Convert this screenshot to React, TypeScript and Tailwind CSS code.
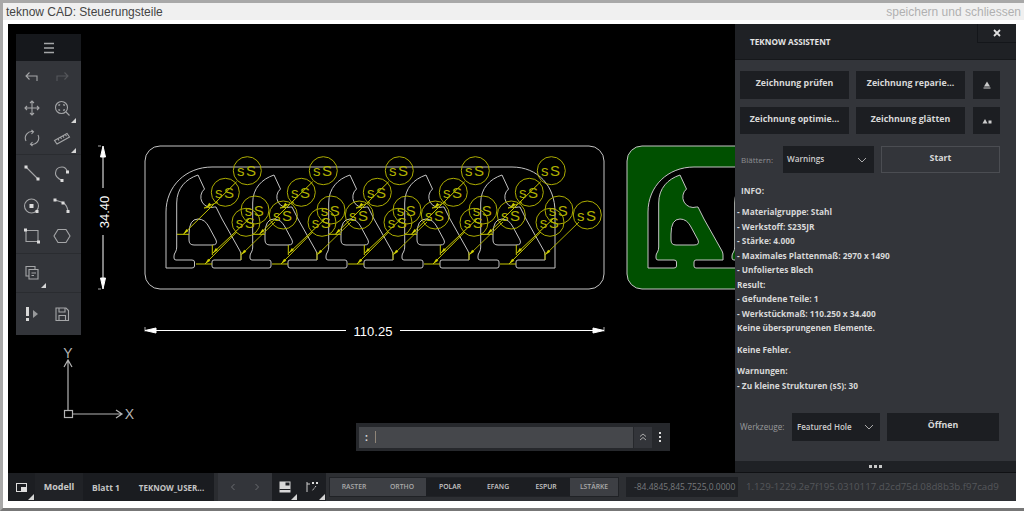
import React from "react";

const OPEN = "font-['Open_Sans',sans-serif]";

const periods = [0, 76, 152, 228, 304];

function contour() {
  let d = "M166 212V268H192Q194.500 268 194.500 266V262Q194.500 260 192 260H176Q174 260 174 258V256Q174 254 175.500 252Q176.700 250 176.700 247";
  periods.forEach((p, i) => {
    const x = (v: number) => v + p;
    if (i > 0) {
      d += `H${x(176)}Q${x(174)} 260 ${x(174)} 258V256Q${x(174)} 254 ${x(175.5)} 252Q${x(176.7)} 250 ${x(176.7)} 247`;
    }
    d += `V203C${x(176.7)} 188 ${x(186)} 179 ${x(198)} 175L${x(204.5)} 189A10.500 10.500 0 0 0 ${x(214.5)} 207L${x(216)} 207L${x(222)} 219L${x(240)} 251Q${x(241)} 253 ${x(241)} 255V260`;
    if (i < 4) {
      d += `H${x(214)}Q${x(212)} 260 ${x(212)} 262V266Q${x(212)} 268 ${x(214)} 268H${x(269)}Q${x(271)} 268 ${x(271)} 266V262Q${x(271)} 260 ${x(269)} 260`;
    }
  });
  d += "H518Q516 260 516 262V266Q516 268 518 268H555V212C555 186 538 167 512 167H212C186 167 166 186 166 212Z";
  return d;
}

const holeD = (p: number) =>
  `M${189 + p} 234Q${189 + p} 219 ${198 + p} 219Q${205 + p} 219 ${209 + p} 227L${216 + p} 240Q${218 + p} 245 ${212 + p} 245H${194 + p}Q${189 + p} 245 ${189 + p} 240Z`;

const Tri = ({ x, y, a }: { x: number; y: number; a: number }) => (
  <polygon points="0,0 6,-1.500 6,1.500" transform={`translate(${x} ${y}) rotate(${a})`} fill="#d0d000" />
);

function Warn({ p }: { p: number }) {
  const circles: [number, number][] = [
    [247.3, 170.7],
    [225.3, 192.3],
    [255, 210],
    [246, 222.3],
    [283.3, 215],
  ];
  return (
    <g>
      <g fill="none" stroke="#acac00" strokeWidth="1">
        {circles.map(([cx, cy], i) => (
          <circle key={i} cx={cx + p} cy={cy} r="14" />
        ))}
        <path d={`M${236.700 + p} 181.700L${183.300 + p} 234.300M${177 + p} 234.300H${189 + p}`} stroke="#c8c800" />
        <path d={`M${218 + p} 202L${204 + p} 208L${212 + p} 207`} />
        <path d={`M${236.700 + p} 232L${205 + p} 264M${196 + p} 264H${212 + p}`} stroke="#c8c800" />
        <path d={`M${250 + p} 218L${212.700 + p} 253.300M${212.300 + p} 245V255`} stroke="#c8c800" />
        <path d={`M${275 + p} 222L${241 + p} 255M${241 + p} 252V260`} />
      </g>
      <Tri x={183.3 + p} y={234.3} a={-45} />
      <Tri x={205 + p} y={264} a={-45} />
      <Tri x={212.7 + p} y={253.3} a={-45} />
      <Tri x={241 + p} y={255} a={-45} />
      <Tri x={206 + p} y={208} a={-45} />
      {circles.map(([cx, cy], i) => (
        <text
          key={i}
          x={cx + p}
          y={cy + 5.5}
          textAnchor="middle"
          fontFamily="'Liberation Sans',sans-serif"
          fontSize="15"
          fill="#b0b000"
          letterSpacing="1.500"
        >
          sS
        </text>
      ))}
    </g>
  );
}

function Drawing() {
  const c = contour();
  return (
    <svg width="727" height="449" viewBox="0 24 727 449" className="block">
      <g transform="translate(-8 0)">
        <rect x="145" y="146" width="459" height="143" rx="15" fill="none" stroke="#c4c4c4" strokeWidth="1" />
        <path d={c} fill="none" stroke="#c4c4c4" strokeWidth="1" />
        {periods.map((p) => (
          <path key={p} d={holeD(p)} fill="none" stroke="#c4c4c4" strokeWidth="1" />
        ))}
        {periods.map((p) => (
          <Warn key={p} p={p} />
        ))}

        <g transform="translate(482 0)">
          <rect x="145" y="146" width="459" height="143" rx="15" fill="#005000" stroke="#c4c4c4" strokeWidth="1" />
          <path d={c} fill="#000" stroke="#c4c4c4" strokeWidth="1" />
          {periods.map((p) => (
            <path key={p} d={holeD(p)} fill="#000" stroke="#c4c4c4" strokeWidth="1" />
          ))}
        </g>

        {/* dimensions */}
        <g stroke="#fff" fill="#fff" strokeWidth="1">
          <path d="M103 150V188M103 235V285" fill="none" />
          <polygon points="103,146 105.500,157 100.500,157" />
          <polygon points="103,289 105.500,278 100.500,278" />
          <path d="M98 146H101M98 289H101" fill="none" stroke="#aaa" />
          <path d="M145 331.500V327M604 331.500V327" fill="none" stroke="#aaa" />
          <path d="M150 330.500H346M400 330.500H600" fill="none" />
          <polygon points="145,330.500 156,328 156,333" />
          <polygon points="604,330.500 593,328 593,333" />
        </g>
        <text x="373" y="335.500" textAnchor="middle" fill="#fff" fontSize="13" fontFamily="'Liberation Sans',sans-serif">
          110.25
        </text>
        <text
          transform="translate(108.500 212) rotate(-90)"
          textAnchor="middle"
          fill="#fff"
          fontSize="13"
          fontFamily="'Liberation Sans',sans-serif"
        >
          34.40
        </text>

        {/* UCS axis */}
        <g stroke="#b4b4b4" fill="none" strokeWidth="1.200">
          <rect x="64.500" y="410.500" width="8" height="7" />
          <path d="M68 410V360M64 367L68 360L72 367" />
          <path d="M72.500 414H122M116 410L122 414L116 418" />
        </g>
        <text x="68" y="358" textAnchor="middle" fill="#b4b4b4" fontSize="14" fontFamily="'Liberation Sans',sans-serif">
          Y
        </text>
        <text x="129.500" y="419" textAnchor="middle" fill="#b4b4b4" fontSize="14" fontFamily="'Liberation Sans',sans-serif">
          X
        </text>
      </g>
    </svg>
  );
}

const ic = "#a5a6a8";

const Corner = () => (
  <span className="absolute right-[1px] bottom-[1px] w-0 h-0 border-l-[6px] border-l-transparent border-b-[6px] border-b-[#d5d5d5]" />
);

function Svg({ children, dim }: { children: React.ReactNode; dim?: boolean }) {
  return (
    <svg width="20" height="20" viewBox="0 0 20 20" fill="none" stroke={dim ? "#55575b" : ic} strokeWidth="1.100">
      {children}
    </svg>
  );
}

const Dot = ({ x, y }: { x: number; y: number }) => <rect x={x - 1.5} y={y - 1.5} width="3" height="3" fill="#dcdcdc" stroke="none" />;

const tools: { el: React.ReactNode; corner?: boolean }[][] = [
  [
    { el: <Svg><path d="M15 14V9H4M7.500 5.500L4 9L7.500 12.500" /></Svg> },
    { el: <Svg dim><path d="M5 14V9H16M12.500 5.500L16 9L12.500 12.500" /></Svg> },
  ],
  [
    { el: <Svg><path d="M10 3V17M3 10H17M8 5L10 3L12 5M8 15L10 17L12 15M5 8L3 10L5 12M15 8L17 10L15 12" /></Svg> },
    {
      el: (
        <Svg>
          <circle cx="9.500" cy="9.500" r="6" />
          <path d="M14 14L17.500 17.500M7 8V6.800H8.200M11 6.800H12.200V8M7 11V12.200H8.200M12.200 11V12.200H11" />
        </Svg>
      ),
      corner: true,
    },
  ],
  [
    { el: <Svg><path d="M4 13A6.500 6.500 0 0 1 11 3.700M16 7A6.500 6.500 0 0 1 9 16.300M9.500 2L11.500 3.800L9.500 5.800M10.500 14.200L8.500 16.200L10.500 18" /></Svg> },
    {
      el: (
        <Svg>
          <path d="M2.500 12.500L15 5.500L17.500 9L5 16ZM6 10.800L7 12.500M8.500 9.300L9.500 11M11 8L12 9.700M13.500 6.600L14.500 8.300" />
        </Svg>
      ),
      corner: true,
    },
  ],
];

const tools2: React.ReactNode[] = [
  <Svg key="a"><path d="M4 4L16 16" /><Dot x={4} y={4} /><Dot x={16} y={16} /></Svg>,
  <Svg key="b"><path d="M10 17.500Q3 14 3.500 10Q4 4 10 4Q14 4 15.500 9" /><Dot x={10} y={17.500} /><Dot x={15.500} y={9} /></Svg>,
  <Svg key="c"><circle cx="9.500" cy="10" r="7" /><rect x="7.500" y="8" width="4" height="4" fill="#dcdcdc" stroke="none" /><Dot x={15} y={15.500} /></Svg>,
  <Svg key="d"><path d="M3 4L11 6.500Q15 9 16 15" /><Dot x={3} y={4} /><Dot x={11} y={7} /><Dot x={16} y={15.500} /></Svg>,
  <Svg key="e"><path d="M4 4.500H16V15.500H4Z" /><Dot x={3.500} y={4} /><Dot x={16.500} y={16} /></Svg>,
  <Svg key="f"><path d="M6 3.500H14L18 10L14 16.500H6L2 10Z" /></Svg>,
];

const Cell = ({ children, corner }: { children?: React.ReactNode; corner?: boolean }) => (
  <div className="relative w-[30px] h-[30px] flex items-center justify-center">
    {children}
    {corner && <span className="absolute right-[1px] bottom-[0px] w-0 h-0 border-l-[5px] border-l-transparent border-b-[5px] border-b-[#d5d5d5]" />}
  </div>
);

function Toolbar() {
  return (
    <div className="absolute left-[8px] top-[10px] w-[65px] flex flex-col bg-[#33353a]">
      <div className="h-[27px] bg-[#16181c] flex items-center justify-center">
        <svg width="12" height="12" viewBox="0 0 12 12" stroke="#a5a6a8" strokeWidth="1.300">
          <path d="M1 1.500H11M1 6H11M1 10.500H11" />
        </svg>
      </div>
      <div className="pt-[1px] pl-[1px] grid grid-cols-[30px_30px] border-b border-[#2a2c30] h-[94px]">
        {tools.flat().map((t, i) => (
          <Cell key={i} corner={t.corner}>{t.el}</Cell>
        ))}
      </div>
      <div className="pt-[3px] pl-[1px] grid grid-cols-[30px_30px] grid-rows-[33px_30px_30px] content-start border-b border-[#2a2c30] h-[99px]">
        {tools2.map((t, i) => (
          <Cell key={i}>{t}</Cell>
        ))}
      </div>
      <div className="h-[39px] pl-[1px] flex items-center border-b border-[#2a2c30]">
        <Cell corner>
          <Svg>
            <path d="M7 13H4V3.500H13V6" />
            <path d="M7 6.500H16V16H7Z" />
            <path d="M9.500 10H14M9.500 12.500H12" />
          </Svg>
        </Cell>
      </div>
      <div className="h-[42px] pl-[1px] grid grid-cols-[30px_30px] items-center">
        <Cell>
          <svg width="20" height="20" viewBox="0 0 20 20">
            <rect x="4" y="3" width="3" height="9" fill="#d8d8d8" />
            <rect x="4" y="14" width="3" height="3" fill="#d8d8d8" />
            <polygon points="11,6 16,10 11,14" fill="#98999b" />
          </svg>
        </Cell>
        <Cell>
          <Svg>
            <path d="M4 4H14L16.500 6.500V16.500H4Z" />
            <path d="M7 4V8H13V4M7 16.500V11.500H13.500V16.500" />
          </Svg>
        </Cell>
      </div>
    </div>
  );
}

function CommandLine() {
  return (
    <div className="absolute left-[348px] top-[399px] w-[314px] h-[28px] bg-[#26282c] flex items-center p-[3px] gap-[1px]">
      <div className="flex-1 h-[21px] bg-[#45474b] flex items-center pl-[6px]">
        <span className={`${OPEN} text-[10px] font-bold text-[#ddd] leading-none`}>:</span>
        <span className="ml-[7px] w-[1px] h-[12px] bg-[#8f8578]" />
      </div>
      <div className="w-[18px] h-[21px] bg-[#33353a] flex items-center justify-center">
        <svg width="10" height="10" viewBox="0 0 10 10" fill="none" stroke="#aaa" strokeWidth="1">
          <path d="M2 4.500L5 2L8 4.500M2 8L5 5.500L8 8" />
        </svg>
      </div>
      <div className="w-[14px] h-[21px] bg-[#26282c] flex flex-col items-center justify-center gap-[2px]">
        <span className="w-[2px] h-[2px] bg-[#ddd]" />
        <span className="w-[2px] h-[2px] bg-[#ddd]" />
        <span className="w-[2px] h-[2px] bg-[#ddd]" />
      </div>
    </div>
  );
}

const Chevron = () => (
  <svg width="10" height="6" viewBox="0 0 10 6" fill="none" stroke="#aaa" strokeWidth="1">
    <path d="M1 1L5 5L9 1" />
  </svg>
);

function Btn({ children, w, h = "h-[28px]" }: { children: React.ReactNode; w: string; h?: string }) {
  return (
    <div className={`${w} ${h} bg-[#1c1e22] flex items-center justify-center ${OPEN} text-[8.800px] font-bold text-[#d8d8d8] pb-[2px]`}>
      {children}
    </div>
  );
}

function Panel() {
  const lines: [string, string][] = [
    ["- Materialgruppe: Stahl", "mt-[7px]"],
    ["- Werkstoff: S235JR", ""],
    ["- Stärke: 4.000", ""],
    ["- Maximales Plattenmaß: 2970 x 1490", ""],
    ["- Unfoliertes Blech", ""],
    ["Result:", ""],
    ["- Gefundene Teile: 1", ""],
    ["- Werkstückmaß: 110.250 x 34.400", ""],
    ["Keine übersprungenen Elemente.", ""],
    ["Keine Fehler.", "mt-[7px]"],
    ["Warnungen:", "mt-[7px]"],
    ["- Zu kleine Strukturen (sS): 30", ""],
  ];
  return (
    <div className={`w-[281px] flex flex-col bg-[#33353a] ${OPEN}`}>
      <div className="relative h-[36px] bg-[#1f2125] border-b border-[#16181b] flex items-center pl-[15px] pt-[2px]">
        <span className="text-[8.200px] font-bold text-[#e4e4e4]">TEKNOW ASSISTENT</span>
        <div className="absolute right-0 top-0 w-[39px] h-[19px] border-l border-b border-[#14161a] flex items-center justify-center">
          <svg width="8" height="8" viewBox="0 0 8 8" stroke="#e0e0e0" strokeWidth="1.800">
            <path d="M1 1L7 7M7 1L1 7" />
          </svg>
        </div>
      </div>
      <div className="pl-[5px] pr-[16px] pt-[11px] flex-1 flex flex-col">
        <div className="flex gap-[7px]">
          <Btn w="w-[109px]">Zeichnung prüfen</Btn>
          <Btn w="w-[109px]">Zeichnung reparie...</Btn>
          <div className="ml-[1px] w-[27px] h-[28px] bg-[#1c1e22] flex items-center justify-center">
            <svg width="10" height="10" viewBox="0 0 10 10">
              <polygon points="5,1.500 8,6.500 2,6.500" fill="#ccc" />
              <rect x="1.500" y="7.500" width="7" height="1" fill="#ccc" />
            </svg>
          </div>
        </div>
        <div className="flex gap-[7px] mt-[8px]">
          <Btn w="w-[109px]" h="h-[27px]">Zeichnung optimie...</Btn>
          <Btn w="w-[109px]" h="h-[27px]">Zeichnung glätten</Btn>
          <div className="ml-[1px] w-[27px] h-[27px] bg-[#1c1e22] flex items-center justify-center">
            <svg width="10" height="8" viewBox="0 0 10 8">
              <polygon points="3,2 5.500,6.500 0.500,6.500" fill="#ccc" />
              <rect x="6.500" y="3.500" width="3" height="3" fill="#ccc" />
            </svg>
          </div>
        </div>
        <div className="flex items-center mt-[12px] h-[27px]">
          <span className="w-[43px] text-[8px] text-[#8e8f92] pl-[1px]">Blättern:</span>
          <div className="w-[91px] h-[27px] bg-[#1c1e22] flex items-center justify-between pl-[4px] pr-[7px] text-[8.200px] font-semibold text-[#ccc]">
            Warnings
            <Chevron />
          </div>
          <div className="ml-[7px] w-[119px] h-[27px] border border-[#4b4d52] flex items-center justify-center text-[8.800px] font-bold text-[#d8d8d8] pb-[2px]">
            Start
          </div>
        </div>
        <div className="mt-[11px] pl-[1px] text-[8.300px] font-bold text-[#d8d8d8] leading-[14px]">INFO:</div>
        <div className="-ml-[3px] text-[8.300px] font-bold text-[#d8d8d8] leading-[14.500px]">
          {lines.map(([t, c]) => (
            <div key={t} className={c}>{t}</div>
          ))}
        </div>
        <div className="flex-1" />
        <div className="flex items-center mb-[20px] h-[28px]">
          <span className="w-[52px] text-[8.200px] text-[#999a9c]">Werkzeuge:</span>
          <div className="w-[88px] h-[28px] bg-[#1c1e22] flex items-center justify-between pl-[5px] pr-[6px] text-[8px] font-semibold text-[#ccc]">
            Featured Hole
            <Chevron />
          </div>
          <div className="ml-[7px] w-[112px] h-[28px] bg-[#1c1e22] flex items-center justify-center text-[8.800px] font-bold text-[#d8d8d8] pb-[2px]">
            Öffnen
          </div>
        </div>
      </div>
      <div className="h-[12px] bg-[#1f2125] border-b border-[#101114] flex items-center justify-center gap-[2px]">
        <span className="w-[3px] h-[3px] bg-[#c8c8c8]" />
        <span className="w-[3px] h-[3px] bg-[#c8c8c8]" />
        <span className="w-[3px] h-[3px] bg-[#c8c8c8]" />
      </div>
    </div>
  );
}

function StatusBar() {
  const tabCls = `${OPEN} font-bold flex items-center justify-center h-full`;
  const modes: [string, boolean][] = [
    ["RASTER", true],
    ["ORTHO", true],
    ["POLAR", false],
    ["EFANG", false],
    ["ESPUR", false],
    ["LSTÄRKE", true],
  ];
  return (
    <div className="h-[28px] bg-[#2d2f33] flex items-stretch">
      <div className="relative w-[27px] bg-[#1c1e22] flex items-center justify-center">
        <svg width="11" height="9" viewBox="0 0 11 9" fill="none" stroke="#ddd" strokeWidth="1">
          <rect x="0.500" y="0.500" width="10" height="8" />
          <rect x="5" y="4" width="5" height="4" fill="#ddd" stroke="none" />
        </svg>
        <Corner />
      </div>
      <div className={`${tabCls} text-[9px] w-[48px] bg-[#202226] text-[#c8c8c8]`}>Modell</div>
      <div className={`${tabCls} text-[8.500px] w-[46px] bg-[#1a1c20] text-[#c4c4c4] pt-[2px]`}>Blatt 1</div>
      <div className={`${tabCls} text-[8px] w-[85px] bg-[#1a1c20] text-[#c4c4c4] pt-[2px]`}>TEKNOW_USER...</div>
      <div className="w-[4px] bg-[#2a2c30]" />
      <div className="w-[54px] bg-[#33353a] flex items-center justify-between px-[12px] text-[#6a6c70]">
        <svg width="6" height="8" viewBox="0 0 6 8" fill="none" stroke="currentColor"><path d="M4.500 1L1.500 4L4.500 7" /></svg>
        <svg width="6" height="8" viewBox="0 0 6 8" fill="none" stroke="currentColor"><path d="M1.500 1L4.500 4L1.500 7" /></svg>
      </div>
      <div className="relative w-[26px] bg-[#1c1e22] flex items-center justify-center">
        <svg width="12" height="12" viewBox="0 0 12 12">
          <rect x="0.500" y="0.500" width="11" height="11" fill="#d8d8d8" />
          <rect x="6.500" y="1.500" width="4" height="3" fill="#1c1e22" />
          <rect x="0.500" y="8" width="11" height="1" fill="#1c1e22" />
        </svg>
        <Corner />
      </div>
      <div className="relative w-[28px] bg-[#1c1e22] flex items-center justify-center">
        <svg width="13" height="12" viewBox="0 0 13 12" fill="none" stroke="#ccc">
          <path d="M1 1V11M1 3H4" />
          <rect x="6" y="1" width="2" height="2" fill="#ddd" stroke="none" />
          <rect x="10" y="1" width="2" height="2" fill="#ddd" stroke="none" />
          <path d="M10 5L6 10" strokeDasharray="2 1" />
        </svg>
        <Corner />
      </div>
      <div className="w-[3px]" />
      <div className="flex items-center">
        <div className="flex h-[20px] border border-[#202226]">
          {modes.map(([m, on]) => (
            <div
              key={m}
              className={`w-[48px] h-full flex items-center justify-center ${OPEN} text-[6.800px] font-semibold ${
                on ? "bg-[#3d3f44] text-[#aaa]" : "bg-[#1c1e22] text-[#c8c8c8]"
              }`}
            >
              {m}
            </div>
          ))}
        </div>
      </div>
      <div className="flex items-center ml-[7px]">
        <div className={`w-[112px] h-[20px] bg-[#1f2125] flex items-center pl-[8px] ${OPEN} text-[8.500px] text-[#77797c] whitespace-nowrap`}>
          -84.4845,845.7525,0.0000
        </div>
      </div>
      <div className={`flex items-center pl-[8px] ${OPEN} text-[9.700px] text-[#55575b] whitespace-nowrap`}>
        1.129-1229.2e7f195.0310117.d2cd75d.08d8b3b.f97cad9
      </div>
    </div>
  );
}

export default function App() {
  return (
    <div className="w-[1024px] h-[511px] bg-white overflow-hidden border-t-[3px] border-l-[3px] border-b-[3px] border-t-[#a8a8a8] border-l-[#a8a8a8] border-b-[#777777] flex flex-col">
      <div className="h-[17px] bg-[#f0f0f0] flex items-center justify-between pl-[3px] pr-[3px] font-['Liberation_Sans',sans-serif] text-[12px] leading-none">
        <span className="text-[#444]">teknow CAD: Steuerungsteile</span>
        <span className="text-[#b0b0b0]">speichern und schliessen</span>
      </div>
      <div className="pl-[5px] pr-[5px] pt-[4px] flex-1">
        <div className="w-[1008px] flex flex-col">
          <div className="flex h-[449px]">
            <div className="relative w-[727px] bg-black overflow-hidden">
              <Drawing />
              <Toolbar />
              <CommandLine />
            </div>
            <Panel />
          </div>
          <StatusBar />
        </div>
      </div>
    </div>
  );
}
